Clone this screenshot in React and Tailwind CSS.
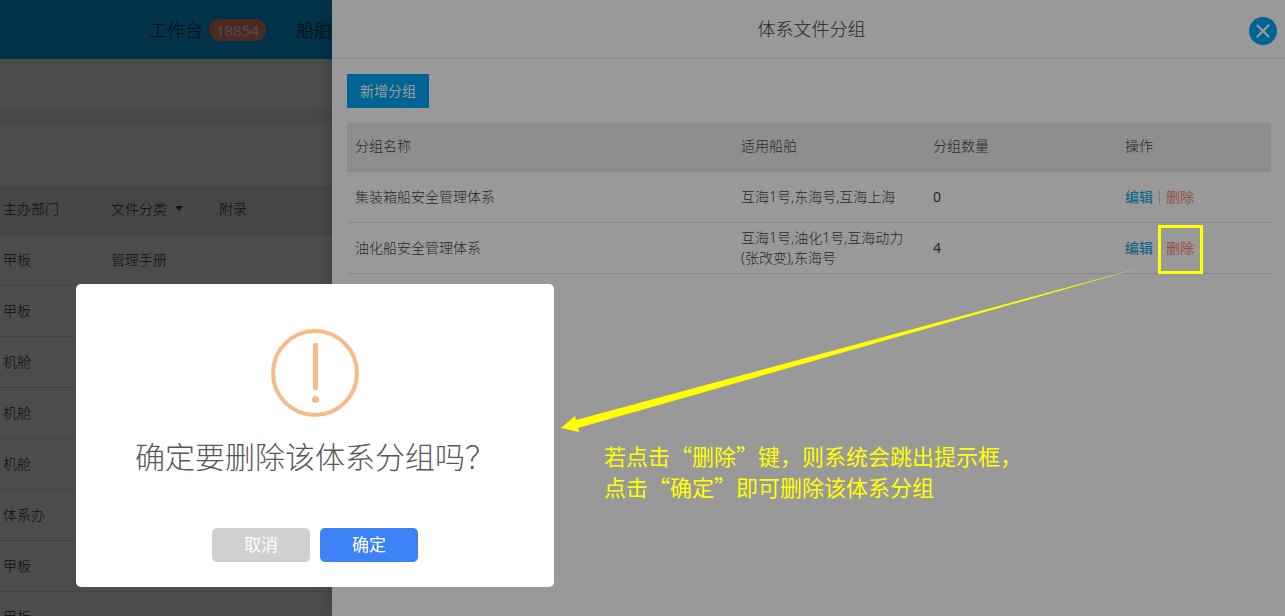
import React, { useState } from 'react';
import { X } from 'lucide-react';

const files = [
  { id: 1, dept: '甲板', category: '管理手册' },
  { id: 2, dept: '甲板', category: '' },
  { id: 3, dept: '机舱', category: '' },
  { id: 4, dept: '机舱', category: '' },
  { id: 5, dept: '机舱', category: '' },
  { id: 6, dept: '体系办', category: '' },
  { id: 7, dept: '甲板', category: '' },
  { id: 8, dept: '甲板', category: '' },
];

const groups = [
  { id: 1, name: '集装箱船安全管理体系', ships: '互海1号,东海号,互海上海', count: 0 },
  { id: 2, name: '油化船安全管理体系', ships: '互海1号,油化1号,互海动力(张改变),东海号', count: 4 },
];

function FilePage() {
  return (
    <div className="bg-white text-sm text-[#333]">
      <header className="flex h-[59px] items-center bg-[#00a9f7] pl-[149px] text-lg text-[#222]">
        <a href="#work" className="flex items-center gap-1.5">
          工作台
          <span className="rounded-full bg-[#ff8c72] px-[7px] text-[15px] font-normal leading-[22px] text-white">18854</span>
        </a>
        <a href="#ship" className="ml-[30px] whitespace-nowrap">船舶</a>
      </header>
      <div className="h-[50px]" />
      <div className="h-[15px] bg-[#eef1f5]" />
      <div className="h-[62px]" />
      <table className="w-full table-fixed text-left">
        <colgroup>
          <col className="w-[103px]" />
          <col className="w-[108px]" />
          <col />
        </colgroup>
        <thead>
          <tr className="h-12 border-b border-[#ddd] bg-[#ebebeb]">
            <th className="pb-0.5 pl-[3px] font-light">主办部门</th>
            <th className="pb-0.5 pl-2 font-light">
              <button className="flex items-center gap-2">
                文件分类
                <span className="border-x-4 border-t-5 border-x-transparent border-t-[#444]" />
              </button>
            </th>
            <th className="pb-0.5 pl-2 font-light">附录</th>
          </tr>
        </thead>
        <tbody>
          {files.map(file => (
            <tr key={file.id} className="h-[51px] border-b border-[#e2e2e2]">
              <td className="pl-[3px]">{file.dept}</td>
              <td className="pl-2">{file.category}</td>
              <td />
            </tr>
          ))}
        </tbody>
      </table>
    </div>
  );
}

function GroupDrawer() {
  return (
    <section className="absolute inset-y-0 left-[332px] right-0 bg-white text-sm text-[#444] shadow-[0_0_16px_rgba(0,0,0,0.2)]">
      <div className="relative flex h-[59px] items-center justify-center border-b border-[#e2e2e2] pl-1.5">
        <h2 className="text-lg">体系文件分组</h2>
        <button aria-label="关闭" className="absolute right-2 top-[17px] flex size-7 items-center justify-center rounded-full bg-[#00a8f8] text-white">
          <X size={22} strokeWidth={2.5} />
        </button>
      </div>
      <div className="pl-[15px] pr-3.5 pt-[15px]">
        <button className="h-[34px] bg-[#00a8f8] px-[13px] font-normal text-white">新增分组</button>
        <table className="mt-[15px] w-full table-fixed text-left">
          <colgroup>
            <col className="w-[386px]" />
            <col className="w-48" />
            <col className="w-48" />
            <col />
          </colgroup>
          <thead>
            <tr className="h-12 border-b-2 border-[#e5e5e5] bg-[#ededed]">
              <th className="px-2 pb-0.5 font-light">分组名称</th>
              <th className="px-2 pb-0.5 font-light">适用船舶</th>
              <th className="px-2 pb-0.5 font-light">分组数量</th>
              <th className="px-2 pb-0.5 font-light">操作</th>
            </tr>
          </thead>
          <tbody>
            {groups.map(group => (
              <tr key={group.id} className="h-[51px] border-b border-[#e2e2e2]">
                <td className="px-2">{group.name}</td>
                <td className="px-2">{group.ships}</td>
                <td className="px-2 font-normal">{group.count}</td>
                <td className="px-2">
                  <div className="flex items-center gap-1.5">
                    <button className="font-normal text-[#00a0e0]">编辑</button>
                    <span className="h-3.5 w-px bg-[#ccc]" />
                    <button className="font-normal text-[#f58b70]">删除</button>
                  </div>
                </td>
              </tr>
            ))}
          </tbody>
        </table>
      </div>
    </section>
  );
}

function ConfirmDialog({ onClose }) {
  return (
    <div role="dialog" aria-labelledby="confirm-title" className="absolute left-[76px] top-[284px] flex w-[478px] flex-col items-center rounded-[5px] bg-white pb-[25px] pt-[45px]">
      <svg width="88" height="88" viewBox="0 0 88 88" fill="#f8bb86">
        <circle cx="44" cy="44" r="42" fill="none" stroke="#f8bb86" strokeWidth="4" />
        <rect x="42" y="14" width="5" height="47" rx="2" />
        <circle cx="44.5" cy="70.5" r="3.5" />
      </svg>
      <h2 id="confirm-title" className="mt-5 text-3xl leading-10 text-[#575757]">确定要删除该体系分组吗？</h2>
      <div className="mt-[51px] flex gap-2.5 text-[17px] font-normal text-white">
        <button onClick={onClose} className="h-[34px] w-[98px] rounded-[5px] bg-[#d0d0d0]">取消</button>
        <button onClick={onClose} className="h-[34px] w-[98px] rounded-[5px] bg-[#3c81f6]">确定</button>
      </div>
    </div>
  );
}

function Guide() {
  return (
    <div className="pointer-events-none absolute inset-0">
      <div className="absolute left-[1158px] top-[225px] h-[49px] w-[45px] border-3 border-[#ffff00]" />
      <svg className="absolute left-[561px] top-[266px]" width="584" height="168" viewBox="0 0 584 168">
        <polygon points="0,162 14,150 15,154 582,1 17,162 18,166" fill="#ffff00" />
      </svg>
      <p className="absolute left-[604px] top-[440px] whitespace-nowrap font-['Noto_Sans_CJK_SC',sans-serif] text-[22px] font-normal leading-[31px] text-[#ffff00]">
        若点击“删除”键，则系统会跳出提示框，
        <br />
        点击“确定”即可删除该体系分组
      </p>
    </div>
  );
}

export default function App() {
  const [open, setOpen] = useState(true);

  return (
    <div lang="zh-CN" className="relative h-screen overflow-hidden font-['Noto_Sans','Noto_Sans_CJK_SC',sans-serif] font-light">
      <FilePage />
      <div className="absolute inset-0 bg-black/50" />
      <GroupDrawer />
      {open && (
        <>
          <div className="absolute inset-0 bg-black/40" />
          <ConfirmDialog onClose={() => setOpen(false)} />
        </>
      )}
      <Guide />
    </div>
  );
}
